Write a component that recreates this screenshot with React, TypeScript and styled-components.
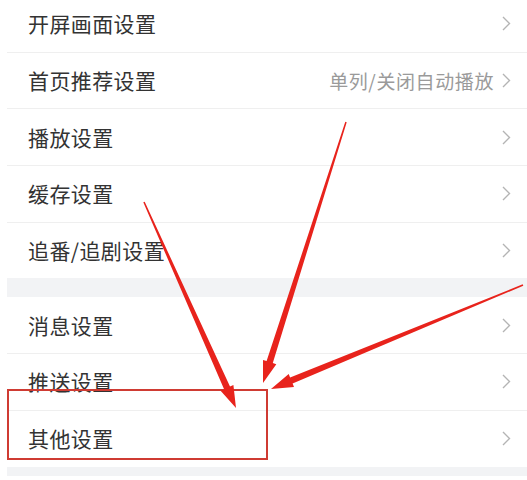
import styled, { createGlobalStyle } from "styled-components";

const GlobalStyle = createGlobalStyle`
  html, body {
    margin: 0;
    padding: 0;
    background: #ffffff;
    overflow: hidden;
  }
`;

type Item = { label: string; value?: string };

const groups: Item[][] = [
  [
    { label: "开屏画面设置" },
    { label: "首页推荐设置", value: "单列/关闭自动播放" },
    { label: "播放设置" },
    { label: "缓存设置" },
    { label: "追番/追剧设置" },
  ],
  [{ label: "消息设置" }, { label: "推送设置" }, { label: "其他设置" }],
];

type Pt = [number, number];

// tapered arrow: thin at the start, thick near the head
const arrowPoints = (from: Pt, tip: Pt, w0: number, w1: number, headLen: number, headW: number) => {
  const dx = tip[0] - from[0];
  const dy = tip[1] - from[1];
  const len = Math.hypot(dx, dy);
  const ux = dx / len;
  const uy = dy / len;
  const nx = -uy;
  const ny = ux;
  const bx = tip[0] - ux * headLen;
  const by = tip[1] - uy * headLen;
  const p = (x: number, y: number) => `${x.toFixed(1)},${y.toFixed(1)}`;
  return [
    p(from[0] + nx * w0 / 2, from[1] + ny * w0 / 2),
    p(bx + nx * w1 / 2, by + ny * w1 / 2),
    p(bx + nx * headW / 2, by + ny * headW / 2),
    p(tip[0], tip[1]),
    p(bx - nx * headW / 2, by - ny * headW / 2),
    p(bx - nx * w1 / 2, by - ny * w1 / 2),
    p(from[0] - nx * w0 / 2, from[1] - ny * w0 / 2),
  ].join(" ");
};

const arrows: { from: Pt; tip: Pt }[] = [
  { from: [144, 202], tip: [236, 408] },
  { from: [346, 122], tip: [263, 383] },
  { from: [523, 285], tip: [271, 389] },
];

export default function App() {
  return (
    <>
      <GlobalStyle />
      <Page>
        {groups.map((group, gi) => (
          <Group key={gi}>
            {group.map((it) => (
              <Row key={it.label}>
                <Label>{it.label}</Label>
                <Right>
                  {it.value && <Value>{it.value}</Value>}
                  <Chevron width="9" height="15" viewBox="0 0 9 15">
                    <path d="M1 1 L7.5 7.5 L1 14" />
                  </Chevron>
                </Right>
              </Row>
            ))}
          </Group>
        ))}
        <Overlay width="527" height="480" viewBox="0 0 527 480">
          <rect x="8" y="390" width="259" height="69" fill="none" stroke="#cf3b33" strokeWidth="2" />
          {arrows.map((a, i) => (
            <polygon key={i} points={arrowPoints(a.from, a.tip, 1.5, 6.5, 22, 14)} fill="#e8231c" />
          ))}
        </Overlay>
      </Page>
    </>
  );
}

const Page = styled.div`
  position: relative;
  height: 480px;
  padding-left: 7px;
  margin-top: -4px;
  background: #ffffff;
  font-family: "Noto Sans CJK SC", "Noto Sans", sans-serif;
`;

const Group = styled.div`
  background: #ffffff;
  border-bottom: 19px solid #f2f3f5;
`;

const Row = styled.div`
  height: 55.7px;
  display: flex;
  align-items: center;
  justify-content: space-between;
  padding: 0 16px 0 21px;
  border-bottom: 1px solid #efefef;

  &:last-child {
    border-bottom: none;
  }
`;

const Label = styled.span`
  font-size: 21px;
  letter-spacing: 0.4px;
  color: #333333;
  line-height: 1;
`;

const Right = styled.div`
  display: flex;
  align-items: center;
  gap: 8px;
`;

const Value = styled.span`
  font-size: 19px;
  letter-spacing: 0.6px;
  color: #9a9a9a;
  line-height: 1;
`;

const Chevron = styled.svg`
  fill: none;
  stroke: #b4b4b4;
  stroke-width: 1.4;
`;

const Overlay = styled.svg`
  position: absolute;
  top: 4px;
  left: 0;
  pointer-events: none;
`;
